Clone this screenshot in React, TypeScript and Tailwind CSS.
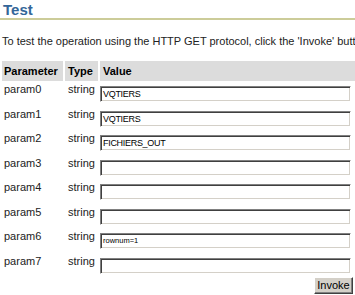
import React from "react";

const rows: { name: string; value: string; small?: boolean }[] = [
  { name: "param0", value: "VQTIERS" },
  { name: "param1", value: "VQTIERS" },
  { name: "param2", value: "FICHIERS_OUT" },
  { name: "param3", value: "" },
  { name: "param4", value: "" },
  { name: "param5", value: "" },
  { name: "param6", value: "rownum=1", small: true },
  { name: "param7", value: "" },
];

export default function App() {
  return (
    <div
      className="w-[355px] h-[295px] overflow-hidden bg-white text-[#222]"
      style={{ fontFamily: '"Liberation Sans", Arial, sans-serif' }}
    >
      <div className="pt-[2px] pl-[3px] h-[18px] text-[15px] leading-[16px] font-bold text-[#336699]">
        Test
      </div>
      <div className="h-[2px] bg-[#cccc99]" />
      <div className="mt-[15px] pl-[2px] text-[11px] leading-[13px] whitespace-nowrap">
        To test the operation using the HTTP GET protocol, click the 'Invoke' button.
      </div>
      <div className="mt-[13px] w-[400px]">
        <div className="flex gap-[2px] pl-[2px] h-[20px] text-[11px] leading-[20px] font-bold text-black">
          <div className="w-[61px] bg-[#dcdcdc] pl-[2px]">Parameter</div>
          <div className="w-[33px] bg-[#dcdcdc] pl-[3px]">Type</div>
          <div className="flex-1 bg-[#dcdcdc] pl-[3px]">Value</div>
        </div>
        {rows.map((r, i) => (
          <div
            key={r.name}
            className={
              "flex items-start pl-[2px] gap-[2px] text-[11px] leading-[13px] " +
              (i % 2 === 0 ? "h-[25px]" : "h-[24px]")
            }
          >
            <div className="w-[61px] pl-[2px] pt-[2px]">{r.name}</div>
            <div className="w-[33px] pl-[3px] pt-[2px]">{r.name ? "string" : ""}</div>
            <div className="pt-[5px]">
              <div className="w-[251px] h-[16px] border border-t-[#808080] border-l-[#808080] border-r-white border-b-white shadow-[inset_1px_1px_0_#404040,inset_-1px_-1px_0_#d4d0c8] flex items-center pl-[2px]">
                <span
                  className={
                    (r.small ? "text-[7.5px]" : "text-[9px] tracking-[-0.3px]") +
                    " leading-none text-black"
                  }
                >
                  {r.value}
                </span>
              </div>
            </div>
          </div>
        ))}
        <div className="w-[353px] flex justify-end">
          <button className="w-[39px] h-[17px] bg-[#d4d0c8] border border-t-white border-l-white border-r-[#404040] border-b-[#404040] shadow-[inset_-1px_-1px_0_#808080] text-[11px] leading-none text-black">
            Invoke
          </button>
        </div>
      </div>
    </div>
  );
}
